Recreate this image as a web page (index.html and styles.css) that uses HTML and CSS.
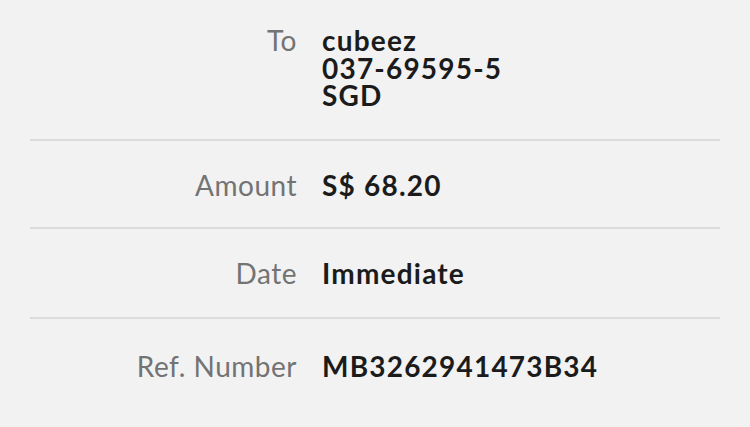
FILE: index.html
```html
<!DOCTYPE html>
<html lang="en">
<head>
  <meta charset="UTF-8">
  <title>Transfer details</title>
  <link rel="stylesheet" href="styles.css">
</head>
<body>
  <div class="details">
    <div class="row row-first">
      <div class="label">To</div>
      <div class="value">
        <div>cubeez</div>
        <div>037-69595-5</div>
        <div>SGD</div>
      </div>
    </div>
    <div class="row row-amount">
      <div class="label">Amount</div>
      <div class="value">S$ 68.20</div>
    </div>
    <div class="row">
      <div class="label">Date</div>
      <div class="value">Immediate</div>
    </div>
    <div class="row row-last">
      <div class="label">Ref. Number</div>
      <div class="value">MB3262941473B34</div>
    </div>
  </div>
</body>
</html>
```

FILE: styles.css
```css
html, body {
  margin: 0;
  height: 100%;
  background: #f2f2f2;
}

body {
  font-family: Lato, 'Noto Sans', sans-serif;
  font-size: 28px;
  line-height: 28px;
}

.details {
  padding: 0 30px;
}

.row {
  display: grid;
  grid-template-columns: 267px 1fr;
  column-gap: 25px;
  padding: 30px 0;
  border-bottom: 2px solid #dcdcdc;
}

.row-first {
  padding: 27px 0 29px;
  line-height: 27.5px;
}

.row-amount {
  padding-bottom: 28px;
}

.row-last {
  padding-top: 33px;
  border-bottom: none;
}

.label {
  text-align: right;
  color: #737373;
  letter-spacing: 0.5px;
}

.value {
  font-weight: bold;
  color: #1b1b1b;
  letter-spacing: 1.2px;
}
```
